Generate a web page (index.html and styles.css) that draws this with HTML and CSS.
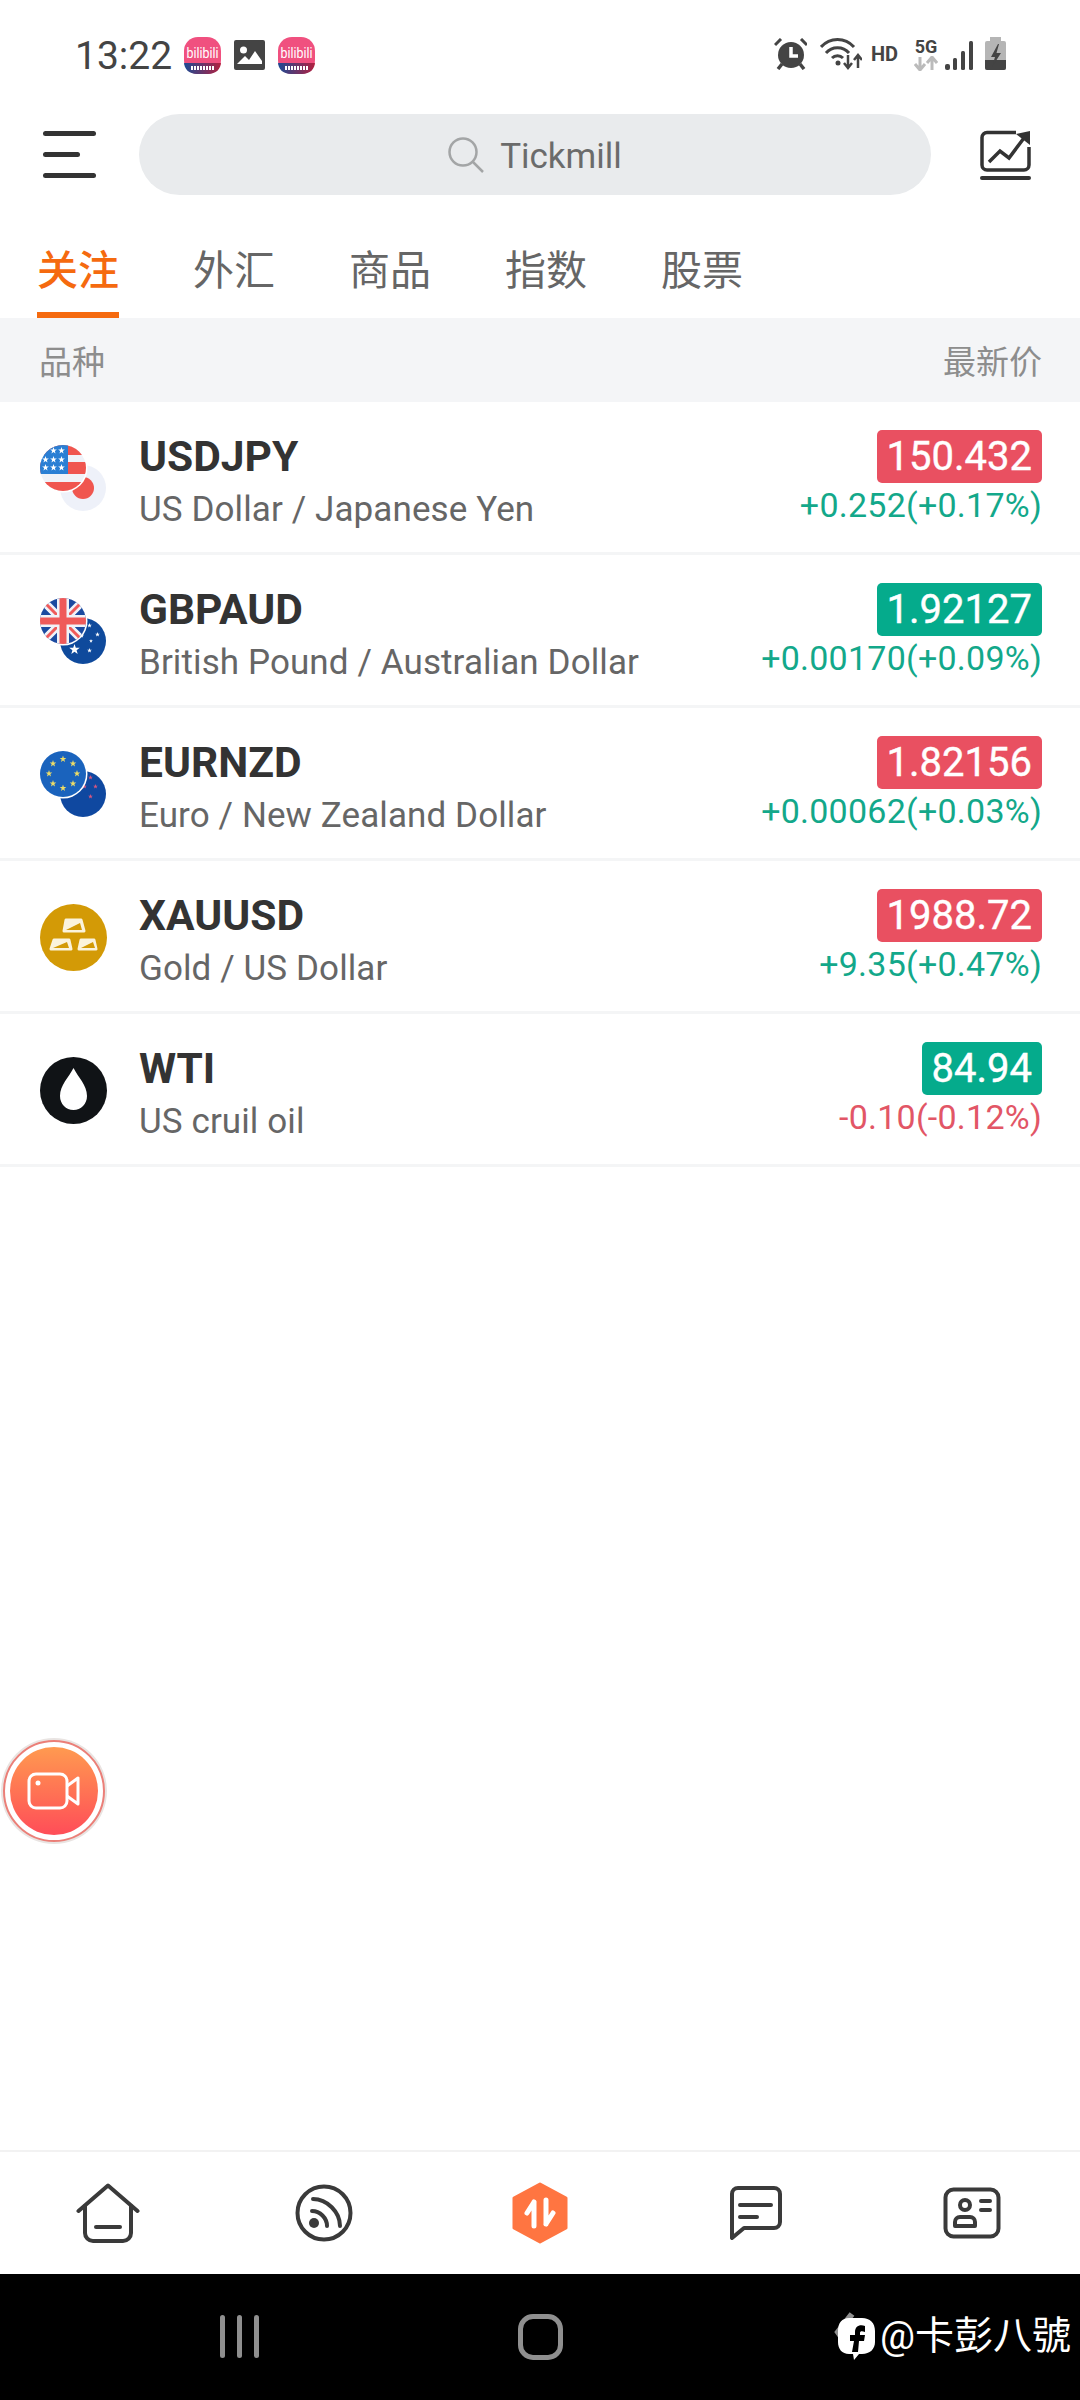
FILE: index.html
```html
<!DOCTYPE html>
<html lang="zh-CN">
<head>
  <meta charset="UTF-8">
  <meta name="viewport" content="width=device-width, initial-scale=1.0">
  <title>关注</title>
  <link rel="stylesheet" href="styles.css">
</head>
<body>
  <!-- shared shapes -->
  <svg class="defs" width="0" height="0">
    <defs>
      <symbol id="star" viewBox="0 0 10 10"><polygon points="5,0 6.2,3.4 9.8,3.5 6.9,5.7 7.9,9.2 5,7.1 2.1,9.2 3.1,5.7 .2,3.5 3.8,3.4"/></symbol>
      <clipPath id="front"><circle cx="23" cy="23" r="23"/></clipPath>
      <linearGradient id="biliBg" x1="0" y1="0" x2="1" y2="0">
        <stop offset="0" stop-color="#1d4a94"/><stop offset="1" stop-color="#b3203f"/>
      </linearGradient>
      <symbol id="bili" viewBox="0 0 37 37">
        <rect width="37" height="37" rx="14" fill="#f0507f"/>
        <path d="M0 26H37V25C37 32 32 37 24 37H13C5 37 0 32 0 25Z" fill="url(#biliBg)"/>
        <text x="18.500" y="21" text-anchor="middle" font-family="Roboto, sans-serif" font-size="14" textLength="32" lengthAdjust="spacingAndGlyphs" fill="#fff">bilibili</text>
        <path d="M7 31H30" stroke="#fff" stroke-width="4" stroke-dasharray="2 1"/>
      </symbol>
    </defs>
  </svg>

  <div class="page">
    <div class="status">
      <span class="time">13:22</span>
      <svg class="ic-bili" width="37" height="37"><use href="#bili"/></svg>
      <svg class="ic-pic" width="31" height="30" viewBox="0 0 31 30">
        <rect width="31" height="30" rx="2" fill="#444"/>
        <circle cx="9.500" cy="10" r="3.500" fill="#fff"/>
        <path d="M3 24L11 16L15 20L21 11L28 21V24Z" fill="#fff"/>
      </svg>
      <svg class="ic-bili" width="37" height="37"><use href="#bili"/></svg>

      <div class="status-right">
        <svg width="33" height="32" viewBox="0 0 33 32">
          <circle cx="17" cy="17" r="13" fill="#444"/>
          <path d="M17 9V18H24" fill="none" stroke="#fff" stroke-width="3.500"/>
          <path d="M1 7L7 1M33 7L27 1" stroke="#444" stroke-width="3"/>
          <path d="M8 26L4 31M26 26L30 31" stroke="#444" stroke-width="3.500"/>
        </svg>
        <svg class="ic-wifi" width="42" height="32" viewBox="0 0 42 32">
          <g fill="none" stroke="#444" stroke-width="3">
            <path d="M1 9C10 -1 25 -1 34 9"/>
            <path d="M6 15C12 8 23 8 29 15"/>
            <path d="M12 20C15 17 20 17 23 20"/>
          </g>
          <circle cx="18" cy="25" r="2.500" fill="#444"/>
          <path d="M28 17V29M24 25L28 30L32 25M38 30V18M34 22L38 17L42 22" fill="none" stroke="#444" stroke-width="2.500"/>
        </svg>
        <span class="hd">HD</span>
        <div class="net">
          <span class="net-label">5G</span>
          <svg width="24" height="15" viewBox="0 0 24 15">
            <path d="M6 1V13M1 8L6 14L11 8" fill="none" stroke="#bbb" stroke-width="3"/>
            <path d="M18 14V2M13 7L18 1L23 7" fill="none" stroke="#bbb" stroke-width="3"/>
          </svg>
        </div>
        <svg class="ic-signal" width="28" height="29" viewBox="0 0 28 29">
          <g fill="#444">
            <rect x="0" y="23" width="5" height="6" rx="2"/>
            <rect x="8" y="17" width="4" height="12" rx="1.500"/>
            <rect x="16" y="10" width="4" height="19" rx="1.500"/>
            <rect x="24" y="0" width="4" height="29" rx="1.500"/>
          </g>
        </svg>
        <svg class="ic-batt" width="21" height="33" viewBox="0 0 21 33">
          <rect x="5" y="0" width="11" height="5" fill="#b5b5b5"/>
          <rect x="0" y="4" width="21" height="29" rx="2" fill="#b5b5b5"/>
          <path d="M0 23H21V31a2 2 0 0 1-2 2H2a2 2 0 0 1-2-2Z" fill="#444"/>
          <path d="M13 7L6 20H10L7 30L16 16H11.500L14 7Z" fill="#444"/>
        </svg>
      </div>
    </div>

    <div class="header">
      <div class="menu"><i></i><i class="short"></i><i></i></div>
      <div class="search">
        <svg width="36" height="36" viewBox="0 0 36 36">
          <circle cx="15" cy="15" r="13.500" fill="none" stroke="#a3a5a6" stroke-width="2.500"/>
          <path d="M25 25L35 35" stroke="#a3a5a6" stroke-width="2.500"/>
        </svg>
        <span class="search-text">Tickmill</span>
      </div>
      <svg width="51" height="50" viewBox="0 0 51 50">
        <path d="M36 2.500H7a5 5 0 0 0-5 5V35a5 5 0 0 0 5 5H44a5 5 0 0 0 5-5V17" fill="none" stroke="#333" stroke-width="3.500"/>
        <path d="M9 32L20 21L29 28L44 8" fill="none" stroke="#333" stroke-width="3.500"/>
        <path d="M36 4L50 1V15Z" fill="#333"/>
        <rect x="0" y="46" width="51" height="4" rx="2" fill="#333"/>
      </svg>
    </div>

    <div class="tabs">
      <div class="tab active">关注</div>
      <div class="tab">外汇</div>
      <div class="tab">商品</div>
      <div class="tab">指数</div>
      <div class="tab">股票</div>
    </div>

    <div class="list-head">
      <span>品种</span>
      <span>最新价</span>
    </div>

    <div class="list">
      <div class="row">
        <svg class="coin" width="66" height="66" viewBox="0 0 66 66">
          <circle cx="43" cy="43" r="23" fill="#eef1f9"/>
          <circle cx="43" cy="43" r="11" fill="#f0564f"/>
          <circle cx="23" cy="23" r="24.500" fill="#fff"/>
          <g clip-path="url(#front)">
            <rect width="46" height="46" fill="#f0f2f8"/>
            <rect y="0" width="46" height="10" fill="#f0554f"/>
            <rect y="17" width="46" height="12" fill="#f0554f"/>
            <rect y="37" width="46" height="9" fill="#f0554f"/>
            <rect width="28" height="29" fill="#2a7fd4"/>
            <g fill="#fff">
              <use href="#star" x="10" y="2" width="7" height="7"/><use href="#star" x="18" y="2" width="7" height="7"/>
              <use href="#star" x="2" y="11" width="7" height="7"/><use href="#star" x="10" y="11" width="7" height="7"/><use href="#star" x="18" y="11" width="7" height="7"/>
              <use href="#star" x="2" y="19" width="7" height="7"/><use href="#star" x="10" y="19" width="7" height="7"/><use href="#star" x="18" y="19" width="7" height="7"/>
            </g>
          </g>
        </svg>
        <div class="name">
          <div class="symbol">USDJPY</div>
          <div class="desc">US Dollar / Japanese Yen</div>
        </div>
        <div class="quote">
          <div class="price down-bg">150.432</div>
          <div class="change up">+0.252(+0.17%)</div>
        </div>
      </div>

      <div class="row">
        <svg class="coin" width="66" height="66" viewBox="0 0 66 66">
          <circle cx="43" cy="43" r="23" fill="#0f4a9c"/>
          <g fill="#fff">
            <use href="#star" x="29" y="46" width="11" height="11"/>
            <use href="#star" x="47" y="25" width="5" height="5"/><use href="#star" x="55" y="34" width="5" height="5"/>
            <use href="#star" x="49" y="41" width="4" height="4"/><use href="#star" x="47" y="50" width="5" height="5"/>
            <use href="#star" x="40" y="36" width="4" height="4"/>
          </g>
          <circle cx="23" cy="23" r="24.500" fill="#fff"/>
          <g clip-path="url(#front)">
            <rect width="46" height="46" fill="#1b4aa0"/>
            <path d="M0 0L46 46M46 0L0 46" stroke="#f0f2f8" stroke-width="8"/>
            <path d="M0 0L46 46M46 0L0 46" stroke="#ef5a5a" stroke-width="3"/>
            <path d="M23 0V46M0 23H46" stroke="#f0f2f8" stroke-width="12"/>
            <path d="M23 0V46M0 23H46" stroke="#ef5a5a" stroke-width="7"/>
          </g>
        </svg>
        <div class="name">
          <div class="symbol">GBPAUD</div>
          <div class="desc">British Pound / Australian Dollar</div>
        </div>
        <div class="quote">
          <div class="price up-bg">1.92127</div>
          <div class="change up">+0.00170(+0.09%)</div>
        </div>
      </div>

      <div class="row">
        <svg class="coin" width="66" height="66" viewBox="0 0 66 66">
          <circle cx="43" cy="43" r="23" fill="#0f48a0"/>
          <g fill="#d9567f">
            <use href="#star" x="48" y="24" width="5" height="5"/><use href="#star" x="42" y="33" width="5" height="5"/>
            <use href="#star" x="53" y="33" width="5" height="5"/><use href="#star" x="48" y="43" width="5" height="5"/>
          </g>
          <circle cx="23" cy="23" r="24.500" fill="#fff"/>
          <circle cx="23" cy="23" r="23" fill="#1a63bd"/>
          <g fill="#eedd66">
            <use href="#star" x="19.500" y="4.500" width="7" height="7"/><use href="#star" x="29.500" y="9" width="7" height="7"/>
            <use href="#star" x="33.500" y="19" width="7" height="7"/><use href="#star" x="29.500" y="29" width="7" height="7"/>
            <use href="#star" x="19.500" y="33.500" width="7" height="7"/><use href="#star" x="9.500" y="29" width="7" height="7"/>
            <use href="#star" x="5.500" y="19" width="7" height="7"/><use href="#star" x="9.500" y="9" width="7" height="7"/>
          </g>
        </svg>
        <div class="name">
          <div class="symbol">EURNZD</div>
          <div class="desc">Euro / New Zealand Dollar</div>
        </div>
        <div class="quote">
          <div class="price down-bg">1.82156</div>
          <div class="change up">+0.00062(+0.03%)</div>
        </div>
      </div>

      <div class="row">
        <svg class="coin" width="67" height="67" viewBox="0 0 67 67">
          <circle cx="33.500" cy="33.500" r="33.500" fill="#d39a06"/>
          <g fill="#fbf3dc" stroke="#fbf3dc" stroke-width="3" stroke-linejoin="round">
            <path d="M26 16H41L44 27H24Z"/>
            <path d="M14 36H29L31 45H11Z"/>
            <path d="M41 36H54L56 45H39Z"/>
          </g>
          <g fill="#d39a06">
            <path d="M26 26L40 19L42 26Z"/>
            <path d="M13 44L27 38L29 44Z"/>
            <path d="M41 44L53 38L55 44Z"/>
          </g>
        </svg>
        <div class="name">
          <div class="symbol">XAUUSD</div>
          <div class="desc">Gold / US Dollar</div>
        </div>
        <div class="quote">
          <div class="price down-bg">1988.72</div>
          <div class="change up">+9.35(+0.47%)</div>
        </div>
      </div>

      <div class="row">
        <svg class="coin" width="67" height="67" viewBox="0 0 67 67">
          <circle cx="33.500" cy="33.500" r="33.500" fill="#101316"/>
          <path d="M33.500 11C38 20 47 28 47 39C47 47 41 53 33.500 53C26 53 20 47 20 39C20 28 29 20 33.500 11Z" fill="#fff"/>
        </svg>
        <div class="name">
          <div class="symbol">WTI</div>
          <div class="desc">US cruil oil</div>
        </div>
        <div class="quote">
          <div class="price up-bg">84.94</div>
          <div class="change down">-0.10(-0.12%)</div>
        </div>
      </div>
    </div>

    <div class="spacer"></div>

    <div class="nav">
      <div class="nav-item">
        <svg width="64" height="60" viewBox="0 0 64 60" fill="none" stroke="#3a3a3a" stroke-width="4" stroke-linecap="round" stroke-linejoin="round">
          <path d="M2.500 28L32 2.500L61.500 28"/>
          <path d="M9 23V50a8 8 0 0 0 8 8H47a8 8 0 0 0 8-8V23"/>
          <path d="M20 44H44"/>
        </svg>
      </div>
      <div class="nav-item">
        <svg width="58" height="58" viewBox="0 0 58 58" fill="none" stroke="#3a3a3a" stroke-width="4" stroke-linecap="round">
          <circle cx="29" cy="29" r="26.500"/>
          <path d="M18 15C32 15 45 28 45 42"/>
          <path d="M17 27C25 27 32 34 32 42"/>
          <circle cx="19" cy="39" r="5" fill="#3a3a3a" stroke="none"/>
        </svg>
      </div>
      <div class="nav-item">
        <svg width="56" height="62" viewBox="0 0 56 62">
          <path d="M28 2L54 16V46L28 60L2 46V16Z" fill="#ff7541" stroke="#ff7541" stroke-width="3" stroke-linejoin="round"/>
          <path d="M22 20V44M22 20L15 31M34 42V18M34 42L41 31" fill="none" stroke="#fff" stroke-width="5" stroke-linecap="round" stroke-linejoin="round"/>
        </svg>
      </div>
      <div class="nav-item">
        <svg width="54" height="56" viewBox="0 0 54 56" fill="none" stroke="#3a3a3a" stroke-width="4" stroke-linecap="round" stroke-linejoin="round">
          <path d="M3 53V9a6 6 0 0 1 6-6H45a6 6 0 0 1 6 6V37a6 6 0 0 1-6 6H15Z"/>
          <path d="M11 20H42M11 32H28"/>
        </svg>
      </div>
      <div class="nav-item">
        <svg width="58" height="52" viewBox="0 0 58 52" fill="none" stroke="#3a3a3a" stroke-width="4" stroke-linecap="round" stroke-linejoin="round">
          <rect x="2.500" y="2.500" width="53" height="47" rx="8"/>
          <circle cx="22" cy="18" r="5"/>
          <path d="M12 39V35a5 5 0 0 1 5-5H27a5 5 0 0 1 5 5V39Z"/>
          <path d="M38 14H47M38 23H47"/>
        </svg>
      </div>
    </div>

    <div class="sysbar">
      <div class="sys-recent"><i></i><i></i><i></i></div>
      <div class="sys-home"></div>
      <div class="mark">
        <svg width="44" height="48" viewBox="0 0 44 48">
          <path d="M20 2L6 20L20 40" fill="none" stroke="#8f8f8f" stroke-width="6"/>
          <path d="M17 6H30C38 6 43 11 43 19V30C43 37 38 42 30 42H27L22 48L21 42H17C10 42 6 37 6 30V19C6 11 10 6 17 6Z" fill="#fff"/>
          <path d="M33 14C27 12 23 15 23 20V23H18V29H22L20 40L26 40L27 29H32L33 23H28V21C28 19 30 19 33 20Z" fill="#000"/>
        </svg>
        <span>@卡彭八號</span>
      </div>
    </div>

    <div class="record">
      <div class="record-inner">
        <svg width="54" height="38" viewBox="0 0 54 38" fill="none" stroke="#fff" stroke-width="3" stroke-linejoin="round">
          <rect x="2" y="2" width="38" height="34" rx="7"/>
          <path d="M40 14L51 6V32L40 24"/>
          <circle cx="11" cy="11" r="2.500" fill="#fff" stroke="none"/>
        </svg>
      </div>
    </div>
  </div>
</body>
</html>
```

FILE: styles.css
```css
* {
  box-sizing: border-box;
}
html, body {
  margin: 0;
  padding: 0;
  background: #fff;
}
body {
  font-family: Roboto, "Noto Sans CJK SC", sans-serif;
}
.defs {
  display: block;
  height: 0;
}
.page {
  position: relative;
  width: 1080px;
  height: 2400px;
  display: flex;
  flex-direction: column;
  overflow: hidden;
}

/* status bar */
.status {
  height: 114px;
  padding: 37px 74px 0 75px;
  display: flex;
  align-items: flex-start;
  color: #444;
}
.time {
  font-size: 39px;
  line-height: 39px;
  width: 109px;
}
.ic-pic {
  margin: 3px 13px 0;
}
.status-right {
  margin-left: auto;
  display: flex;
  align-items: flex-start;
  margin-top: 1px;
}
.ic-wifi {
  margin-left: 13px;
}
.hd {
  font-size: 20px;
  font-weight: 700;
  line-height: 32px;
  margin-left: 9px;
}
.net {
  margin-left: 16px;
  display: flex;
  flex-direction: column;
  align-items: center;
  width: 24px;
}
.net-label {
  font-size: 18px;
  font-weight: 700;
  line-height: 18px;
}
.ic-signal {
  margin: 3px 0 0 7px;
}
.ic-batt {
  margin: -1px 0 0 12px;
}

/* search row */
.header {
  height: 81px;
  padding: 0 49px 0 43px;
  display: flex;
  align-items: center;
}
.menu {
  width: 53px;
  height: 47px;
  margin-right: 43px;
  display: flex;
  flex-direction: column;
  justify-content: space-between;
}
.menu i {
  display: block;
  height: 5px;
  border-radius: 3px;
  background: #333;
}
.menu i.short {
  width: 37px;
}
.search {
  flex: 1;
  height: 81px;
  margin-right: 49px;
  border-radius: 41px;
  background: #e9ebed;
  display: flex;
  align-items: center;
  justify-content: center;
  gap: 16px;
  font-size: 35px;
  color: #6b6b6b;
}
.search-text {
  margin-top: 3px;
}

/* tabs */
.tabs {
  height: 123px;
  padding-left: 37px;
  display: flex;
  gap: 74px;
}
.tab {
  width: 82px;
  padding-top: 53px;
  font-size: 41px;
  line-height: 46px;
  white-space: nowrap;
  color: #666;
}
.tab.active {
  color: #f56a0f;
  font-weight: 500;
  border-bottom: 6px solid #f56a0f;
}

.list-head {
  height: 84px;
  padding: 0 38px 0 39px;
  background: #f4f5f7;
  display: flex;
  align-items: center;
  justify-content: space-between;
  font-size: 33px;
  color: #8d8d8d;
}

/* rows */
.row {
  height: 153px;
  padding: 31px 38px 0 40px;
  display: grid;
  grid-template-columns: 99px 1fr auto;
  align-items: start;
  border-bottom: 3px solid #f4f5f6;
}
.coin {
  margin-top: 12px;
}
.symbol {
  font-size: 42.5px;
  font-weight: 700;
  line-height: 48px;
  color: #333;
}
.desc {
  margin-top: 8px;
  font-size: 35px;
  letter-spacing: 0.1px;
  line-height: 42px;
  color: #666;
}
.quote {
  margin-top: -3px;
  display: flex;
  flex-direction: column;
  align-items: flex-end;
}
.price {
  height: 53px;
  padding: 0 10px;
  border-radius: 5px;
  font-size: 40px;
  line-height: 54px;
  -webkit-text-stroke: 0.4px #fff;
  color: #fff;
}
.down-bg {
  background: #e95061;
}
.up-bg {
  background: #05ab8c;
}
.change {
  margin-top: 1px;
  font-size: 34px;
  letter-spacing: 0.25px;
  line-height: 42px;
}
.up {
  color: #13a88a;
}
.down {
  color: #e25666;
}

.spacer {
  flex: 1;
}

/* bottom nav */
.nav {
  height: 124px;
  border-top: 2px solid #f2f2f2;
  display: flex;
}
.nav-item {
  flex: 1;
  display: flex;
  align-items: center;
  justify-content: center;
}

/* android buttons */
.sysbar {
  height: 126px;
  background: #000;
  position: relative;
  display: flex;
  align-items: center;
  padding-left: 220px;
}
.sys-recent {
  display: flex;
  gap: 12px;
  margin-top: -1px;
}
.sys-recent i {
  display: block;
  width: 5px;
  height: 43px;
  border-radius: 3px;
  background: #8f8f8f;
}
.sys-home {
  width: 45px;
  height: 46px;
  margin-left: 259px;
  border: 5px solid #8f8f8f;
  border-radius: 15px;
}
.mark {
  position: absolute;
  left: 832px;
  top: 38px;
  display: flex;
  align-items: center;
  gap: 4px;
  font-size: 39px;
  line-height: 48px;
  color: #fff;
  font-family: Roboto, "Noto Sans CJK TC", sans-serif;
}

/* floating recorder */
.record {
  position: absolute;
  left: 3px;
  top: 1740px;
  width: 102px;
  height: 102px;
  border-radius: 50%;
  background: #fff;
  border: 2px solid #eb7f78;
  box-shadow: 0 0 0 2px #e9e4e2;
  display: flex;
  align-items: center;
  justify-content: center;
}
.record-inner {
  width: 88px;
  height: 88px;
  border-radius: 50%;
  background: linear-gradient(#ff9a50, #ff4d58);
  display: flex;
  align-items: center;
  justify-content: center;
}
```
